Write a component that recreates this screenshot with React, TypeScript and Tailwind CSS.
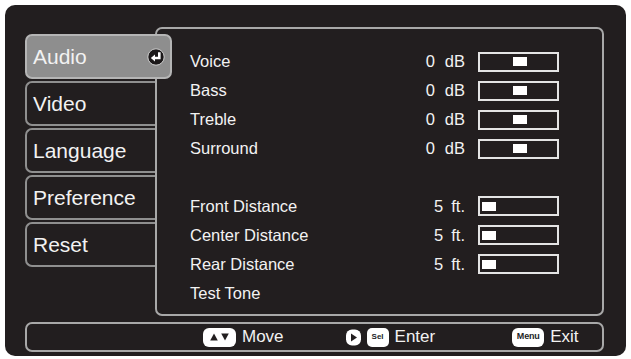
import React from "react";

const tabs = ["Audio", "Video", "Language", "Preference", "Reset"];

type Row = { label: string; num?: string; unit?: string; pos?: "mid" | "left" };

const audioRows: Row[] = [
  { label: "Voice", num: "0", unit: "dB", pos: "mid" },
  { label: "Bass", num: "0", unit: "dB", pos: "mid" },
  { label: "Treble", num: "0", unit: "dB", pos: "mid" },
  { label: "Surround", num: "0", unit: "dB", pos: "mid" },
];
const distRows: Row[] = [
  { label: "Front Distance", num: "5", unit: "ft.", pos: "left" },
  { label: "Center Distance", num: "5", unit: "ft.", pos: "left" },
  { label: "Rear Distance", num: "5", unit: "ft.", pos: "left" },
  { label: "Test Tone" },
];

function EnterIcon() {
  return (
    <svg width="18" height="18" viewBox="0 0 18 18">
      <circle cx="9" cy="9" r="8.2" fill="#1b1819" stroke="#d0d0d0" strokeWidth="1" />
      <path d="M12.3 4.3 V10 H7.5" fill="none" stroke="#ffffff" strokeWidth="2.6" strokeLinejoin="miter" />
      <path d="M3.8 10 L8 6.4 L8 13.6 Z" fill="#ffffff" />
    </svg>
  );
}

function Slider({ pos }: { pos: "mid" | "left" }) {
  return (
    <div
      className={
        "flex h-[20px] w-[81px] items-center border-2 border-[#e4e4e4] " +
        (pos === "mid" ? "justify-center pl-[3px]" : "justify-start pl-[2px]")
      }
    >
      <div className="h-[9px] w-[14px] bg-white" />
    </div>
  );
}

function ItemRow({ row }: { row: Row }) {
  return (
    <div className="flex h-[29px] items-center">
      <span className="flex-1">{row.label}</span>
      {row.num && (
        <>
          <span className="flex justify-end">
            <span>{row.num}</span>
            <span className={row.unit === "dB" ? "ml-[10px]" : "ml-[8px]"}>{row.unit}</span>
          </span>
          <span className="ml-[13px]">
            <Slider pos={row.pos!} />
          </span>
        </>
      )}
    </div>
  );
}

export default function App() {
  return (
    <div className="h-[359px] w-[631px] bg-white pl-[5px] pt-[5px] font-['Liberation_Sans',Arial,sans-serif] text-[#f2f2f2]">
      <div className="flex h-[351px] w-[621px] flex-col rounded-[10px] bg-[#221e1f] pl-[20px] pr-[22px] pt-[22px]">
        <div className="flex h-[289px]">
          <div className="relative z-10 flex w-[130px] shrink-0 flex-col gap-[2px] pt-[7px]">
            {tabs.map((t, i) =>
              i === 0 ? (
                <div
                  key={t}
                  className="flex h-[45px] w-[147px] items-center justify-between rounded-[7px] border-2 border-[#b5b5b5] bg-[#8e8e8e] pl-[6px] pr-[5px] text-[21px]"
                >
                  <span>{t}</span>
                  <EnterIcon />
                </div>
              ) : (
                <div
                  key={t}
                  className="flex h-[45px] w-[130px] items-center rounded-l-[7px] border-y-2 border-l-2 border-[#8f8f8f] pl-[6px] text-[21px]"
                >
                  {t}
                </div>
              )
            )}
          </div>
          <div className="flex-1 rounded-[7px] border-2 border-[#a8a8a8] pl-[33px] pr-[43px] pt-[18px] text-[16.5px]">
            {audioRows.map((r) => (
              <ItemRow key={r.label} row={r} />
            ))}
            <div className="h-[28.5px]" />
            {distRows.map((r) => (
              <ItemRow key={r.label} row={r} />
            ))}
          </div>
        </div>
        <div className="mt-[6px] flex h-[30px] items-center rounded-[7px] border-2 border-[#a8a8a8] text-[17px]">
          <div className="ml-[176px] flex items-center">
            <div className="flex h-[19px] w-[33px] items-center justify-center gap-[3px] rounded-[6px] bg-white">
              <svg width="8" height="8" viewBox="0 0 8 8">
                <path d="M4 0.5 L7.8 7.5 L0.2 7.5 Z" fill="#221e1f" />
              </svg>
              <svg width="8" height="8" viewBox="0 0 8 8">
                <path d="M0.2 0.5 L7.8 0.5 L4 7.5 Z" fill="#221e1f" />
              </svg>
            </div>
            <span className="ml-[6px]">Move</span>
          </div>
          <div className="ml-[62px] flex items-center">
            <svg width="15" height="17" viewBox="0 0 15 17">
              <rect x="0" y="0.5" width="15" height="16" rx="6" fill="#ffffff" />
              <path d="M5 4.5 L11 8.5 L5 12.5 Z" fill="#221e1f" />
            </svg>
            <div className="ml-[6px] flex h-[19px] w-[22px] items-center justify-center rounded-[5px] bg-white text-[8px] font-bold text-[#221e1f]">
              Sel
            </div>
            <span className="ml-[6px]">Enter</span>
          </div>
          <div className="ml-[77px] flex items-center">
            <div className="flex h-[19px] w-[32px] items-center justify-center rounded-[6px] bg-white text-[9px] font-bold tracking-[-0.2px] text-[#221e1f]">
              Menu
            </div>
            <span className="ml-[6px]">Exit</span>
          </div>
        </div>
      </div>
    </div>
  );
}
